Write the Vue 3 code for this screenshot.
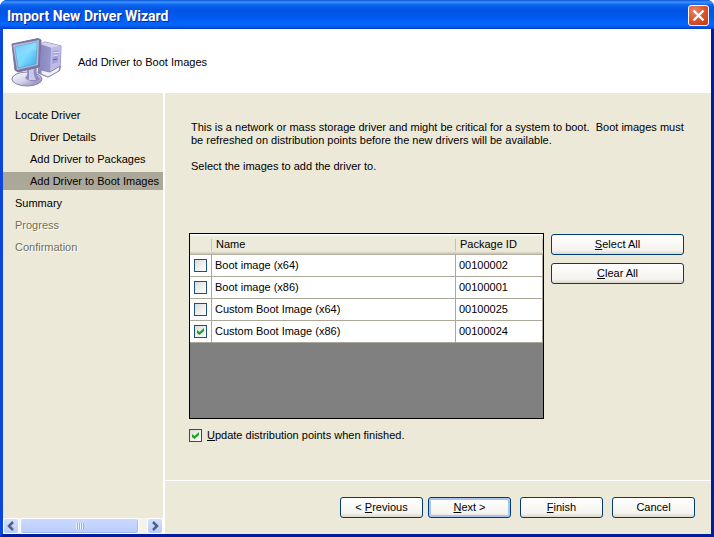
<template>
  <div class="window">
    <header class="titlebar">
      <h1 class="title">Import New Driver Wizard</h1>
      <button class="close" type="button" aria-label="Close">
        <svg width="13" height="13" viewBox="0 0 13 13">
          <path d="M1.500 1.500L11.500 11.500M11.500 1.500L1.500 11.500" stroke="#fff" stroke-width="2.400" />
        </svg>
      </button>
    </header>

    <div class="frame">
      <div class="banner">
        <svg class="computer" width="52" height="50" viewBox="0 0 52 50">
          <defs>
            <linearGradient id="screen" x1="0" y1="0" x2="1" y2="1">
              <stop offset="0" stop-color="#4fbdf6" />
              <stop offset="0.5" stop-color="#7ddcff" />
              <stop offset="1" stop-color="#39a6ee" />
            </linearGradient>
            <linearGradient id="side" x1="0" y1="0" x2="1" y2="0">
              <stop offset="0" stop-color="#8583bd" />
              <stop offset="1" stop-color="#a9a7d8" />
            </linearGradient>
            <linearGradient id="base" x1="0" y1="0" x2="1" y2="1">
              <stop offset="0" stop-color="#ffffff" />
              <stop offset="0.5" stop-color="#d5d4e8" />
              <stop offset="1" stop-color="#7a78a8" />
            </linearGradient>
          </defs>
          <path d="M29 6L34 4L50 8L49 32L37 39L27 35Z" fill="url(#side)" stroke="#8482b8" />
          <path d="M29 6L34 4L50 8L41 10Z" fill="#d5d4f0" />
          <path d="M40 10L50 8L49 31L39 36Z" fill="#bdbbe8" />
          <path d="M42 13L48 12L47 24L41 26Z" fill="#a3a1d6" />
          <path d="M42 15L48 14M42 18L47 17" stroke="#e6e5f8" />
          <path d="M42 22L46 21" stroke="#62609a" />
          <path d="M30 32L39 34L49 28L48 33L37 39L30 36Z" fill="#f0f0f7" stroke="#8a88ad" />
          <ellipse cx="16" cy="41" rx="15" ry="7" fill="url(#base)" stroke="#8482ab" />
          <path d="M15 30L26 28C25 34 26 38 29 41C25 45 18 44 14 40C17 37 17 34 15 30Z" fill="#8f8dc2" />
          <path d="M18 31L23 30C22 35 23 38 25 42L18 42Z" fill="#c9c8e8" />
          <path d="M1 6L27 0.500L30 2L28 29L7 34L4 32Z" fill="#7775a4" stroke="#74739c" />
          <path d="M2 7L28 2L27 27L6 32Z" fill="#b9bbd4" />
          <path d="M4 9L26 4L25 26L7 30Z" fill="url(#screen)" stroke="#3a8ecb" stroke-width="0.500" />
          <path d="M4 9L26 4L25.500 12C17 12 11 17 6 22Z" fill="#a3e2ff" opacity="0.400" />
        </svg>
        <h2 class="banner-title">Add Driver to Boot Images</h2>
      </div>

      <div class="body">
        <aside class="sidebar">
          <ul class="steps">
            <li v-for="step in steps" :key="step.label" class="step"
              :class="{ child: step.child, current: step.current, disabled: step.disabled }">
              {{ step.label }}
            </li>
          </ul>
          <div class="scrollbar">
            <button class="arrow" type="button" aria-label="Scroll left">
              <svg width="8" height="10" viewBox="0 0 8 10">
                <path d="M6 1L2 5L6 9" fill="none" stroke="#4d6185" stroke-width="2.500" />
              </svg>
            </button>
            <div class="thumb"><span class="grip"></span></div>
            <button class="arrow" type="button" aria-label="Scroll right">
              <svg width="8" height="10" viewBox="0 0 8 10">
                <path d="M2 1L6 5L2 9" fill="none" stroke="#4d6185" stroke-width="2.500" />
              </svg>
            </button>
          </div>
        </aside>

        <div class="main">
          <main class="content">
            <div class="description">
              <p>This is a network or mass storage driver and might be critical for a system to boot.&nbsp; Boot images must
                be refreshed on distribution points before the new drivers will be available.</p>
              <p>Select the images to add the driver to.</p>
            </div>

            <div class="picker">
              <div class="grid">
                <table>
                  <thead>
                    <tr>
                      <th class="col-check"></th>
                      <th>Name</th>
                      <th class="col-id">Package ID</th>
                    </tr>
                  </thead>
                  <tbody>
                    <tr v-for="image in images" :key="image.id">
                      <td class="col-check">
                        <input v-model="image.selected" type="checkbox" :aria-label="image.name">
                      </td>
                      <td>{{ image.name }}</td>
                      <td>{{ image.id }}</td>
                    </tr>
                  </tbody>
                </table>
              </div>
              <div class="actions">
                <button class="btn" type="button" @click="setAll(true)"><u>S</u>elect All</button>
                <button class="btn" type="button" @click="setAll(false)"><u>C</u>lear All</button>
              </div>
            </div>

            <label class="update">
              <input v-model="updatePoints" type="checkbox">
              <span><u>U</u>pdate distribution points when finished.</span>
            </label>
          </main>

          <footer class="footer">
            <div class="pair">
              <button class="btn" type="button">&lt; <u>P</u>revious</button>
              <button class="btn default" type="button"><u>N</u>ext &gt;</button>
            </div>
            <button class="btn" type="button"><u>F</u>inish</button>
            <button class="btn" type="button">Cancel</button>
          </footer>
        </div>
      </div>
    </div>
  </div>
</template>

<script setup>
import { ref, reactive } from "vue";

const steps = [
  { label: "Locate Driver" },
  { label: "Driver Details", child: true },
  { label: "Add Driver to Packages", child: true },
  { label: "Add Driver to Boot Images", child: true, current: true },
  { label: "Summary" },
  { label: "Progress", disabled: true },
  { label: "Confirmation", disabled: true },
];

const images = reactive([
  { name: "Boot image (x64)", id: "00100002", selected: false },
  { name: "Boot image (x86)", id: "00100001", selected: false },
  { name: "Custom Boot Image (x64)", id: "00100025", selected: false },
  { name: "Custom Boot Image (x86)", id: "00100024", selected: true },
]);

const updatePoints = ref(true);

const setAll = (value) => {
  images.forEach((image) => {
    image.selected = value;
  });
};
</script>

<style>
body {
  background: #fff;
}
</style>

<style scoped>
* {
  box-sizing: border-box;
}

.window {
  display: flex;
  flex-direction: column;
  min-height: 100vh;
  border-radius: 7px 7px 0 0;
  overflow: hidden;
  background: #0a3fd8;
  color: #000;
  font: 11px/13px "Liberation Sans", sans-serif;
}

.titlebar {
  display: flex;
  align-items: center;
  justify-content: space-between;
  height: 29px;
  padding: 2px 5px 0 7px;
  background: linear-gradient(#0a50d0 0, #3c93ff 2px, #0a62ee 5px, #0054e3 10px, #0058ec 17px, #0466ff 24px, #0462f4 26px, #003bc4 29px);
}

.title {
  margin: 0;
  color: #fff;
  font: bold 14px/18px Roboto, sans-serif;
  text-shadow: 1px 1px 0 #0a2a90;
}

.close {
  display: flex;
  align-items: center;
  justify-content: center;
  width: 21px;
  height: 21px;
  padding: 0;
  border: 1px solid #fff;
  border-radius: 3px;
  background: radial-gradient(circle at 30% 25%, #ea8466, #dc4f28 55%, #c13a12);
}

.frame {
  flex: 1;
  display: flex;
  flex-direction: column;
  border: solid;
  border-width: 0 3px 3px;
  border-color: #0831d9 #001da0 #001da0 #0a46dc;
}

.banner {
  display: flex;
  align-items: center;
  gap: 15px;
  height: 64px;
  padding: 3px 8px 0;
  background: #fff;
}

.banner-title {
  margin: 0;
  font-size: 11px;
  font-weight: normal;
}

.body {
  flex: 1;
  display: flex;
  background: #ece9d8;
}

.sidebar {
  flex: none;
  display: flex;
  flex-direction: column;
  justify-content: space-between;
  width: 162px;
  border-right: 2px solid #fff;
}

.steps {
  display: flex;
  flex-direction: column;
  gap: 4px;
  margin: 0;
  padding: 13px 0 0;
  list-style: none;
}

.step {
  padding: 3px 0 2px 12px;
  line-height: 13px;
  white-space: nowrap;
}

.step.child {
  padding-left: 27px;
}

.step.current {
  background: #aca899;
}

.step.disabled {
  color: #716f50;
  text-shadow: 1px 1px 0 #fff;
}

.scrollbar {
  display: flex;
  height: 16px;
  background: #f3f2ee;
}

.arrow {
  display: flex;
  align-items: center;
  justify-content: center;
  width: 16px;
  padding: 0;
  border: 1px solid #fff;
  border-radius: 3px;
  background: linear-gradient(#d3dffe, #b9cbf7);
}

.thumb {
  flex: 1;
  display: flex;
  align-items: center;
  justify-content: center;
  margin: 0 8px 0 1px;
  border: 1px solid #fff;
  border-radius: 3px;
  background: linear-gradient(#cbd9ff, #b9cdfd);
  box-shadow: inset -1px -1px 0 #a3b8ec;
}

.grip {
  width: 8px;
  height: 6px;
  background: repeating-linear-gradient(90deg, #eef4fe 0 1px, #8cb0f8 1px 2px);
}

.main {
  flex: 1;
  display: flex;
  flex-direction: column;
}

.content {
  flex: 1;
  padding: 28px 27px 0 24px;
}

.description {
  display: flex;
  flex-direction: column;
  gap: 13px;
  min-height: 112px;
  padding-left: 2px;
}

.description p {
  margin: 0;
}

.picker {
  display: flex;
  gap: 7px;
}

.grid {
  flex: 1;
  min-height: 186px;
  border: 1px solid #000;
  background: #808080;
}

table {
  width: 100%;
  border-collapse: separate;
  border-spacing: 0;
  table-layout: fixed;
}

th {
  height: 21px;
  padding: 0 4px;
  background:
    linear-gradient(#c5c2b2, #c5c2b2) right center / 1px 12px no-repeat,
    linear-gradient(#fff 0 1px, #ebeadb 2px, #ebeadb 17px, #d6d2c2 19px, #aca899 21px);
  font-weight: normal;
  text-align: left;
}

td {
  height: 22px;
  padding: 0 3px;
  border: solid #aca899;
  border-width: 0 1px 1px 0;
  background: #fff;
}

.col-check {
  width: 22px;
  padding: 0 4px;
}

.col-id {
  width: 87px;
}

input[type="checkbox"] {
  appearance: none;
  display: flex;
  align-items: center;
  justify-content: center;
  flex: none;
  width: 13px;
  height: 13px;
  margin: 0;
  border: 1px solid #1c5180;
  background: linear-gradient(135deg, #dcdcd7, #fff);
}

input[type="checkbox"]:checked::before {
  content: "";
  width: 7px;
  height: 7px;
  background: #21a121;
  clip-path: polygon(0 29%, 36% 57%, 100% 0, 100% 43%, 36% 100%, 0 71%);
}

.actions {
  flex: none;
  display: flex;
  flex-direction: column;
  gap: 8px;
  width: 133px;
  padding-top: 1px;
}

.btn {
  height: 21px;
  padding: 0 6px;
  border: 1px solid #003c74;
  border-radius: 3px;
  background: linear-gradient(#fff, #f4f3ee 80%, #dcd7cb);
  color: #000;
  font: inherit;
}

.btn.default {
  box-shadow: inset 0 0 0 2px #a9c3f3;
}

.update {
  display: flex;
  align-items: center;
  gap: 5px;
  width: fit-content;
  margin-top: 10px;
}

.footer {
  display: flex;
  justify-content: flex-end;
  gap: 9px;
  padding: 16px 16px 16px 0;
  border-top: 1px solid #fff;
}

.footer .btn {
  width: 83px;
}

.pair {
  display: flex;
  gap: 5px;
}
</style>
